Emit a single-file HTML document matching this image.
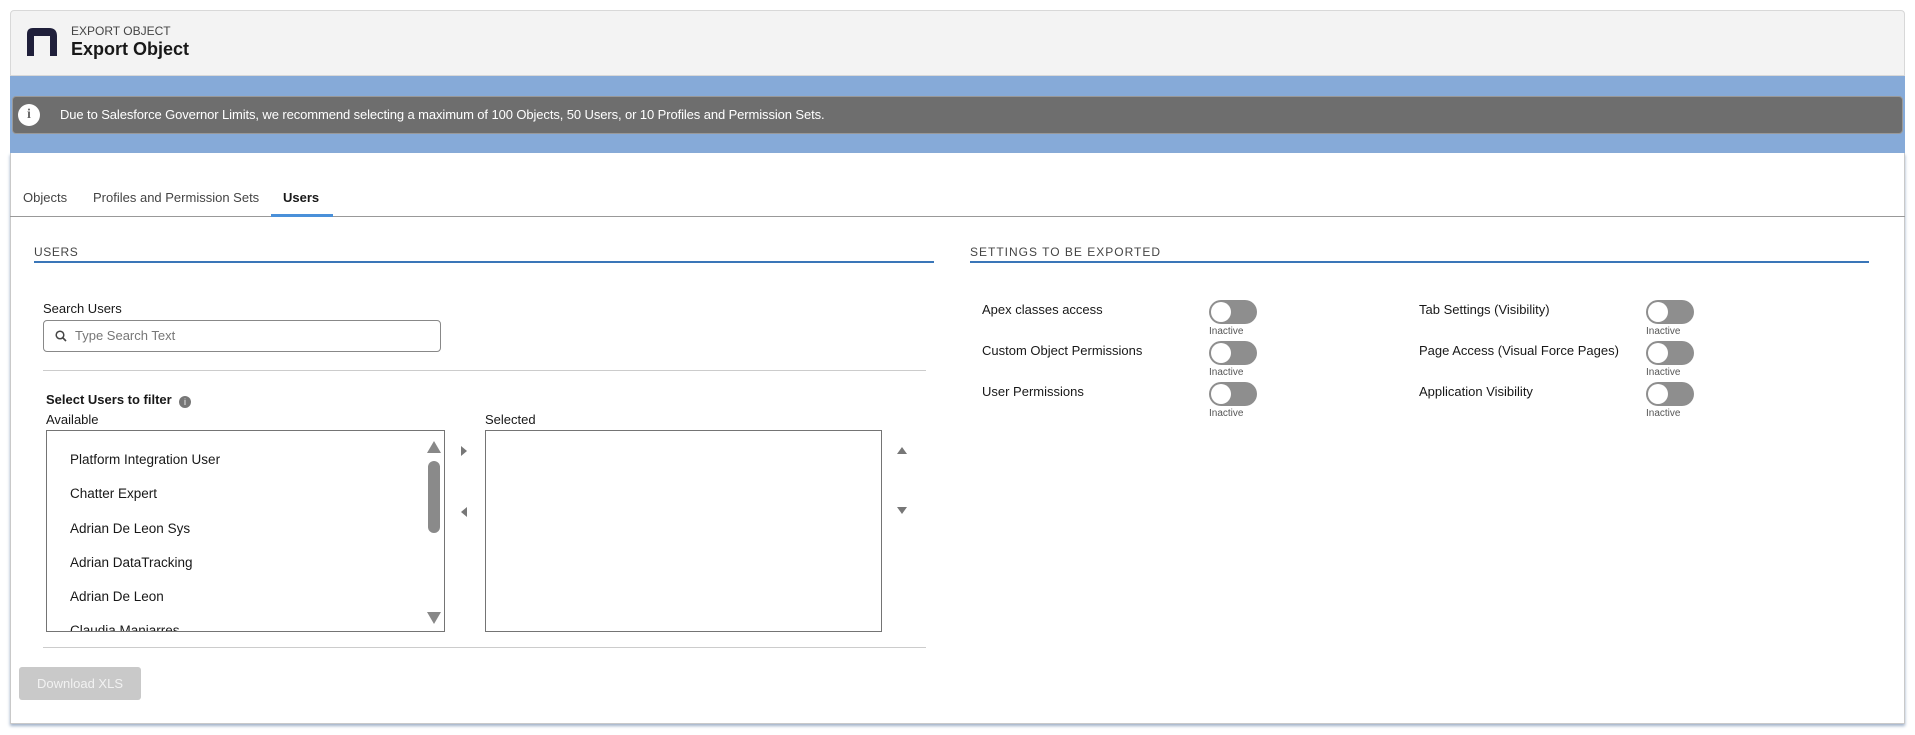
<!DOCTYPE html>
<html><head><meta charset="utf-8"><style>
*{box-sizing:border-box;margin:0;padding:0}
body{width:1915px;height:735px;background:#fff;font-family:"Liberation Sans",sans-serif;color:#181818;position:relative;overflow:hidden}
.abs{position:absolute}
.hdr{left:10px;top:10px;width:1895px;height:66px;background:#f3f3f3;border:1px solid #d8d8d8;border-radius:4px 4px 0 0}
.band{left:10px;top:76px;width:1895px;height:78px;background:#86aad8}
.alert{left:12px;top:96px;width:1891px;height:38px;background:#6e6e6e;border:1px solid #999;border-radius:4px;color:#fff;font-size:13px;line-height:36px;padding-left:47px;letter-spacing:-.1px}
.card{left:10px;top:153px;width:1895px;height:571px;background:#fff;border:1px solid #c9c9c9;border-top:none;box-shadow:0 2px 3px #9fb0c8}
.t{font-size:14px;white-space:nowrap}
.box{border:1px solid #747474;background:#fff}
.tg{width:48px;height:24px;border-radius:12px;background:#8e8e8e}
.tg::after{content:"";position:absolute;left:2px;top:2px;width:20px;height:20px;border-radius:50%;background:#fff}
.ina{font-size:10px;color:#555}
</style></head><body>
<div class="abs hdr"></div>
<svg class="abs" style="left:27px;top:28px" width="30" height="28" viewBox="0 0 30 28"><path d="M0 28V6Q0 0 6 0H22Q30 0 30 8V28H23V8H7V28Z" fill="#1f1f3a"/></svg>
<div class="abs t" style="left:71px;top:24px;font-size:12px;color:#444">EXPORT OBJECT</div>
<div class="abs t" style="left:71px;top:39px;font-size:18px;font-weight:bold">Export Object</div>
<div class="abs band"></div>
<div class="abs alert">Due to Salesforce Governor Limits, we recommend selecting a maximum of 100 Objects, 50 Users, or 10 Profiles and Permission Sets.</div>
<div class="abs" style="left:18px;top:104px;width:22px;height:22px;border-radius:50%;background:#fff;color:#6b6b6b;font-weight:bold;font-size:14px;text-align:center;line-height:22px;font-family:'Liberation Serif',serif">i</div>
<div class="abs card"></div>
<div class="abs t" style="left:23px;top:190px;color:#444;font-size:13px">Objects</div>
<div class="abs t" style="left:93px;top:190px;color:#444;font-size:13px">Profiles and Permission Sets</div>
<div class="abs t" style="left:283px;top:190px;font-weight:bold;font-size:13px">Users</div>
<div class="abs" style="left:10px;top:216px;width:1895px;height:1px;background:#999"></div>
<div class="abs" style="left:271px;top:214px;width:62px;height:3px;background:#4a90d9"></div>
<div class="abs t" style="left:34px;top:245px;font-size:12px;color:#444;letter-spacing:.6px">USERS</div>
<div class="abs" style="left:34px;top:261px;width:900px;height:2px;background:#3a76b8"></div>
<div class="abs t" style="left:970px;top:245px;font-size:12px;color:#444;letter-spacing:1px">SETTINGS TO BE EXPORTED</div>
<div class="abs" style="left:970px;top:261px;width:899px;height:2px;background:#3a76b8"></div>
<div class="abs t" style="left:43px;top:301px;font-size:13px">Search Users</div>
<div class="abs" style="left:43px;top:320px;width:398px;height:32px;border:1px solid #888;border-radius:4px"></div>
<svg class="abs" style="left:55px;top:330px" width="12" height="12" viewBox="0 0 12 12"><circle cx="5" cy="5" r="3.8" fill="none" stroke="#444" stroke-width="1.5"/><path d="M8 8L11 11" stroke="#444" stroke-width="1.6"/></svg>
<div class="abs t" style="left:75px;top:328px;font-size:13px;color:#777">Type Search Text</div>
<div class="abs" style="left:43px;top:370px;width:883px;height:1px;background:#ccc"></div>
<div class="abs t" style="left:46px;top:392px;font-size:13px;font-weight:bold">Select Users to filter</div>
<div class="abs" style="left:179px;top:396px;width:12px;height:12px;border-radius:50%;background:#777;color:#fff;font-size:9px;text-align:center;line-height:12px">i</div>
<div class="abs t" style="left:46px;top:412px;font-size:13px">Available</div>
<div class="abs t" style="left:485px;top:412px;font-size:13px">Selected</div>
<div class="abs box" style="left:46px;top:430px;width:399px;height:202px;overflow:hidden">
<div class="abs t" style="left:23px;top:21px;font-size:13.5px">Platform Integration User</div>
<div class="abs t" style="left:23px;top:55px;font-size:13.5px">Chatter Expert</div>
<div class="abs t" style="left:23px;top:90px;font-size:13.5px">Adrian De Leon Sys</div>
<div class="abs t" style="left:23px;top:124px;font-size:13.5px">Adrian DataTracking</div>
<div class="abs t" style="left:23px;top:158px;font-size:13.5px">Adrian De Leon</div>
<div class="abs t" style="left:23px;top:192px;font-size:13.5px">Claudia Manjarres</div>
<svg class="abs" style="left:380px;top:10px" width="14" height="12"><path d="M7 0L14 12H0Z" fill="#888"/></svg>
<div class="abs" style="left:381px;top:30px;width:12px;height:72px;border-radius:6px;background:#8a8a8a"></div>
<svg class="abs" style="left:380px;top:181px" width="14" height="12"><path d="M0 0H14L7 12Z" fill="#888"/></svg>
</div>
<div class="abs box" style="left:485px;top:430px;width:397px;height:202px"></div>
<svg class="abs" style="left:461px;top:446px" width="6" height="10"><path d="M0 0L6 5L0 10Z" fill="#777"/></svg>
<svg class="abs" style="left:461px;top:507px" width="6" height="10"><path d="M6 0L0 5L6 10Z" fill="#777"/></svg>
<svg class="abs" style="left:897px;top:447px" width="10" height="7"><path d="M5 0L10 7H0Z" fill="#777"/></svg>
<svg class="abs" style="left:897px;top:507px" width="10" height="7"><path d="M0 0H10L5 7Z" fill="#777"/></svg>
<div class="abs" style="left:43px;top:647px;width:883px;height:1px;background:#ccc"></div>
<div class="abs" style="left:19px;top:667px;width:122px;height:33px;background:#c9c9c9;border-radius:3px;color:#f2f2f2;font-size:13px;text-align:center;line-height:33px">Download XLS</div>

<div class="abs t" style="left:982px;top:302px;font-size:13px">Apex classes access</div>
<div class="abs tg" style="left:1209px;top:300px"></div><div class="abs ina" style="left:1209px;top:326px">Inactive</div>
<div class="abs t" style="left:982px;top:343px;font-size:13px">Custom Object Permissions</div>
<div class="abs tg" style="left:1209px;top:341px"></div><div class="abs ina" style="left:1209px;top:367px">Inactive</div>
<div class="abs t" style="left:982px;top:384px;font-size:13px">User Permissions</div>
<div class="abs tg" style="left:1209px;top:382px"></div><div class="abs ina" style="left:1209px;top:408px">Inactive</div>
<div class="abs t" style="left:1419px;top:302px;font-size:13px">Tab Settings (Visibility)</div>
<div class="abs tg" style="left:1646px;top:300px"></div><div class="abs ina" style="left:1646px;top:326px">Inactive</div>
<div class="abs t" style="left:1419px;top:343px;font-size:13px">Page Access (Visual Force Pages)</div>
<div class="abs tg" style="left:1646px;top:341px"></div><div class="abs ina" style="left:1646px;top:367px">Inactive</div>
<div class="abs t" style="left:1419px;top:384px;font-size:13px">Application Visibility</div>
<div class="abs tg" style="left:1646px;top:382px"></div><div class="abs ina" style="left:1646px;top:408px">Inactive</div>
</body></html>
